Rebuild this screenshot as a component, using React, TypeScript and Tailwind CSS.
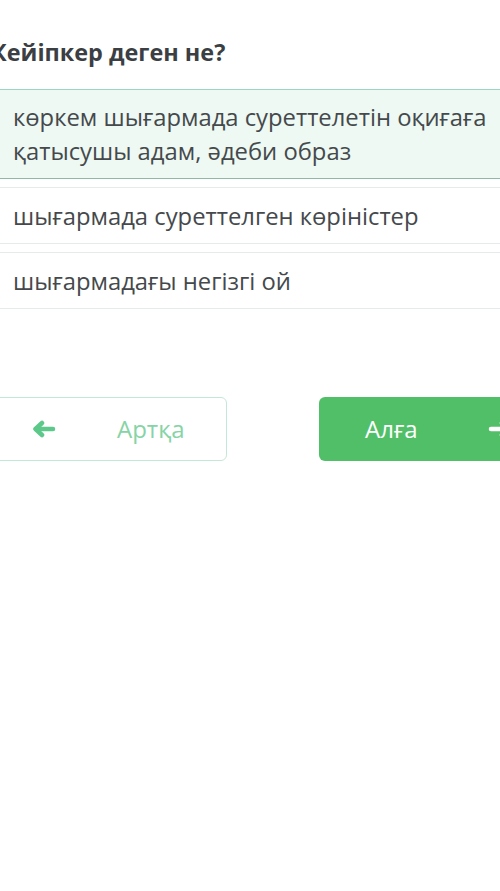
const options = [
  { text: 'көркем шығармада суреттелетін оқиғаға қатысушы адам, әдеби образ', selected: true },
  { text: 'шығармада суреттелген көріністер', selected: false },
  { text: 'шығармадағы негізгі ой', selected: false },
];

function Arrow({ left, className }: { left?: boolean; className: string }) {
  return (
    <svg viewBox="0 0 24 18" className={className} fill="none" stroke="currentColor" strokeWidth={4.5} strokeLinecap="round" strokeLinejoin="round">
      {left ? (
        <>
          <path d="M21 9H4" />
          <path d="M10 3L3.5 9L10 15" />
        </>
      ) : (
        <>
          <path d="M3 9H20" />
          <path d="M14 3L20.5 9L14 15" />
        </>
      )}
    </svg>
  );
}

export default function App() {
  return (
    <div className="w-[500px] h-[891px] overflow-hidden bg-white font-['Open_Sans',sans-serif]">
      <div className="-ml-[20px] w-[600px] pt-[36px]">
        <h1 className="pl-[11px] text-[23.4px] leading-[32px] font-bold text-[#3b3f44]">Кейіпкер деген не?</h1>

        <div className="mt-[21px] flex flex-col gap-[8px]">
          {options.map((o) => (
            <div
              key={o.text}
              className={
                o.selected
                  ? 'border border-[#9ad6c0] border-b-[#8fb8aa] bg-[#eef9f3] pl-[32px] pr-[60px] py-[10px]'
                  : 'border border-[#e6eaea] bg-white pl-[32px] pr-[60px] py-[10.5px]'
              }
            >
              <p className="text-[23.8px] leading-[34px] text-[#45494c] max-w-[500px]">{o.text}</p>
            </div>
          ))}
        </div>

        <div className="mt-[88px] flex gap-[92px]">
          <button className="w-[247px] h-[64px] rounded-[6px] border border-[#c3e8d6] bg-white flex items-center text-[#86d4a6]">
            <Arrow left className="ml-[51px] w-[24px] h-[18px] text-[#5cc98a]" />
            <span className="ml-[61px] text-[24px]">Артқа</span>
          </button>
          <button className="w-[247px] h-[64px] rounded-[6px] bg-[#51bf68] flex items-center text-white">
            <span className="ml-[46px] text-[24px]">Алға</span>
            <Arrow className="ml-[70px] w-[24px] h-[18px]" />
          </button>
        </div>
      </div>
    </div>
  );
}
